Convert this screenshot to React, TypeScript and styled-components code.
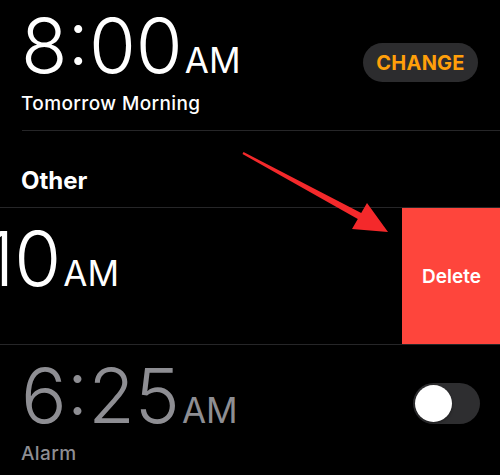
import React from "react";
import styled, { createGlobalStyle } from "styled-components";

const Global = createGlobalStyle`
  html, body { margin: 0; padding: 0; background: #000; }
  body { font-family: "Inter", "Noto Sans", sans-serif; color: #fff; }
  #root { width: 500px; height: 475px; overflow: hidden; }
`;

const Screen = styled.div`
  position: relative;
  width: 500px;
  height: 475px;
  background: #000;
  overflow: hidden;
`;

const Row = styled.div<{ $padTop: number; $height: number }>`
  display: flex;
  justify-content: space-between;
  align-items: flex-start;
  height: ${(p) => p.$height}px;
  padding: ${(p) => p.$padTop}px 20px 0 21px;
  box-sizing: border-box;
`;

const TextBlock = styled.div`
  display: flex;
  flex-direction: column;
`;

const Time = styled.div<{ $dim?: boolean }>`
  font-size: 76px;
  line-height: 76px;
  height: 76px;
  font-weight: 300;
  color: ${(p) => (p.$dim ? "#8e8e93" : "#fff")};
  white-space: nowrap;
`;

const Meridiem = styled.span`
  font-size: 35px;
  line-height: 1;
  font-weight: 400;
  margin-left: 2px;
`;

const Label = styled.div<{ $dim?: boolean; $gap: number }>`
  margin-top: ${(p) => p.$gap}px;
  font-size: 19px;
  line-height: 22px;
  font-weight: 500;
  letter-spacing: 0.4px;
  color: ${(p) => (p.$dim ? "#8e8e93" : "#fff")};
`;

const Divider = styled.div<{ $inset?: number }>`
  height: 1px;
  margin-left: ${(p) => p.$inset ?? 0}px;
  background: #262628;
`;

const ChangeButton = styled.button`
  margin-top: 36px;
  margin-right: 2px;
  width: 115px;
  height: 39px;
  border: none;
  border-radius: 20px;
  background: #2c2c2e;
  color: #ff9f0a;
  font-family: "Inter", sans-serif;
  font-size: 20px;
  font-weight: 700;
  letter-spacing: 0.2px;
  padding: 0;
`;

const SectionHeader = styled.div`
  height: 76px;
  box-sizing: border-box;
  padding: 35px 21px 0;
  font-size: 24px;
  line-height: 30px;
  font-weight: 700;
  color: #fff;
`;

const SwipeRow = styled.div`
  display: flex;
  height: 136px;
  overflow: hidden;
`;

const SwipeContent = styled.div<{ $offset: number }>`
  flex: 0 0 500px;
  margin-left: -${(p) => p.$offset}px;
  padding: 12px 0 0 21px;
  box-sizing: border-box;
`;

const DeleteAction = styled.div`
  flex: 0 0 99px;
  display: flex;
  align-items: center;
  justify-content: center;
  background: #fe453c;
  color: #fff;
  font-size: 19px;
  font-weight: 600;
`;

const Toggle = styled.div`
  margin-top: 26px;
  width: 67px;
  height: 41px;
  border-radius: 21px;
  background: #2e2e30;
  display: flex;
  align-items: center;
  padding: 0 2px;
  box-sizing: border-box;
`;

const Knob = styled.div`
  width: 37px;
  height: 37px;
  border-radius: 50%;
  background: #fff;
  box-shadow: 0 1px 3px rgba(0, 0, 0, 0.4);
`;

const ArrowLayer = styled.svg`
  position: absolute;
  left: 0;
  top: 0;
  pointer-events: none;
`;

export default function App() {
  return (
    <Screen>
      <Global />
      <Row $padTop={7} $height={130}>
        <TextBlock>
          <Time>
            8:00<Meridiem>AM</Meridiem>
          </Time>
          <Label $gap={10}>Tomorrow Morning</Label>
        </TextBlock>
        <ChangeButton>CHANGE</ChangeButton>
      </Row>
      <Divider $inset={22} />
      <SectionHeader>Other</SectionHeader>
      <Divider />
      <SwipeRow>
        <SwipeContent $offset={98}>
          <Time>
            7:10<Meridiem>AM</Meridiem>
          </Time>
        </SwipeContent>
        <DeleteAction>Delete</DeleteAction>
      </SwipeRow>
      <Divider />
      <Row $padTop={12} $height={136}>
        <TextBlock>
          <Time $dim>
            6:25<Meridiem>AM</Meridiem>
          </Time>
          <Label $dim $gap={10}>
            Alarm
          </Label>
        </TextBlock>
        <Toggle>
          <Knob />
        </Toggle>
      </Row>
      <ArrowLayer width="500" height="475" viewBox="0 0 500 475">
        <polygon
          points="243.5,152.1 361.2,212.9 367,203 388,232 352,229 357.8,219.1 242.5,153.9"
          fill="#f4292b"
        />
      </ArrowLayer>
    </Screen>
  );
}
